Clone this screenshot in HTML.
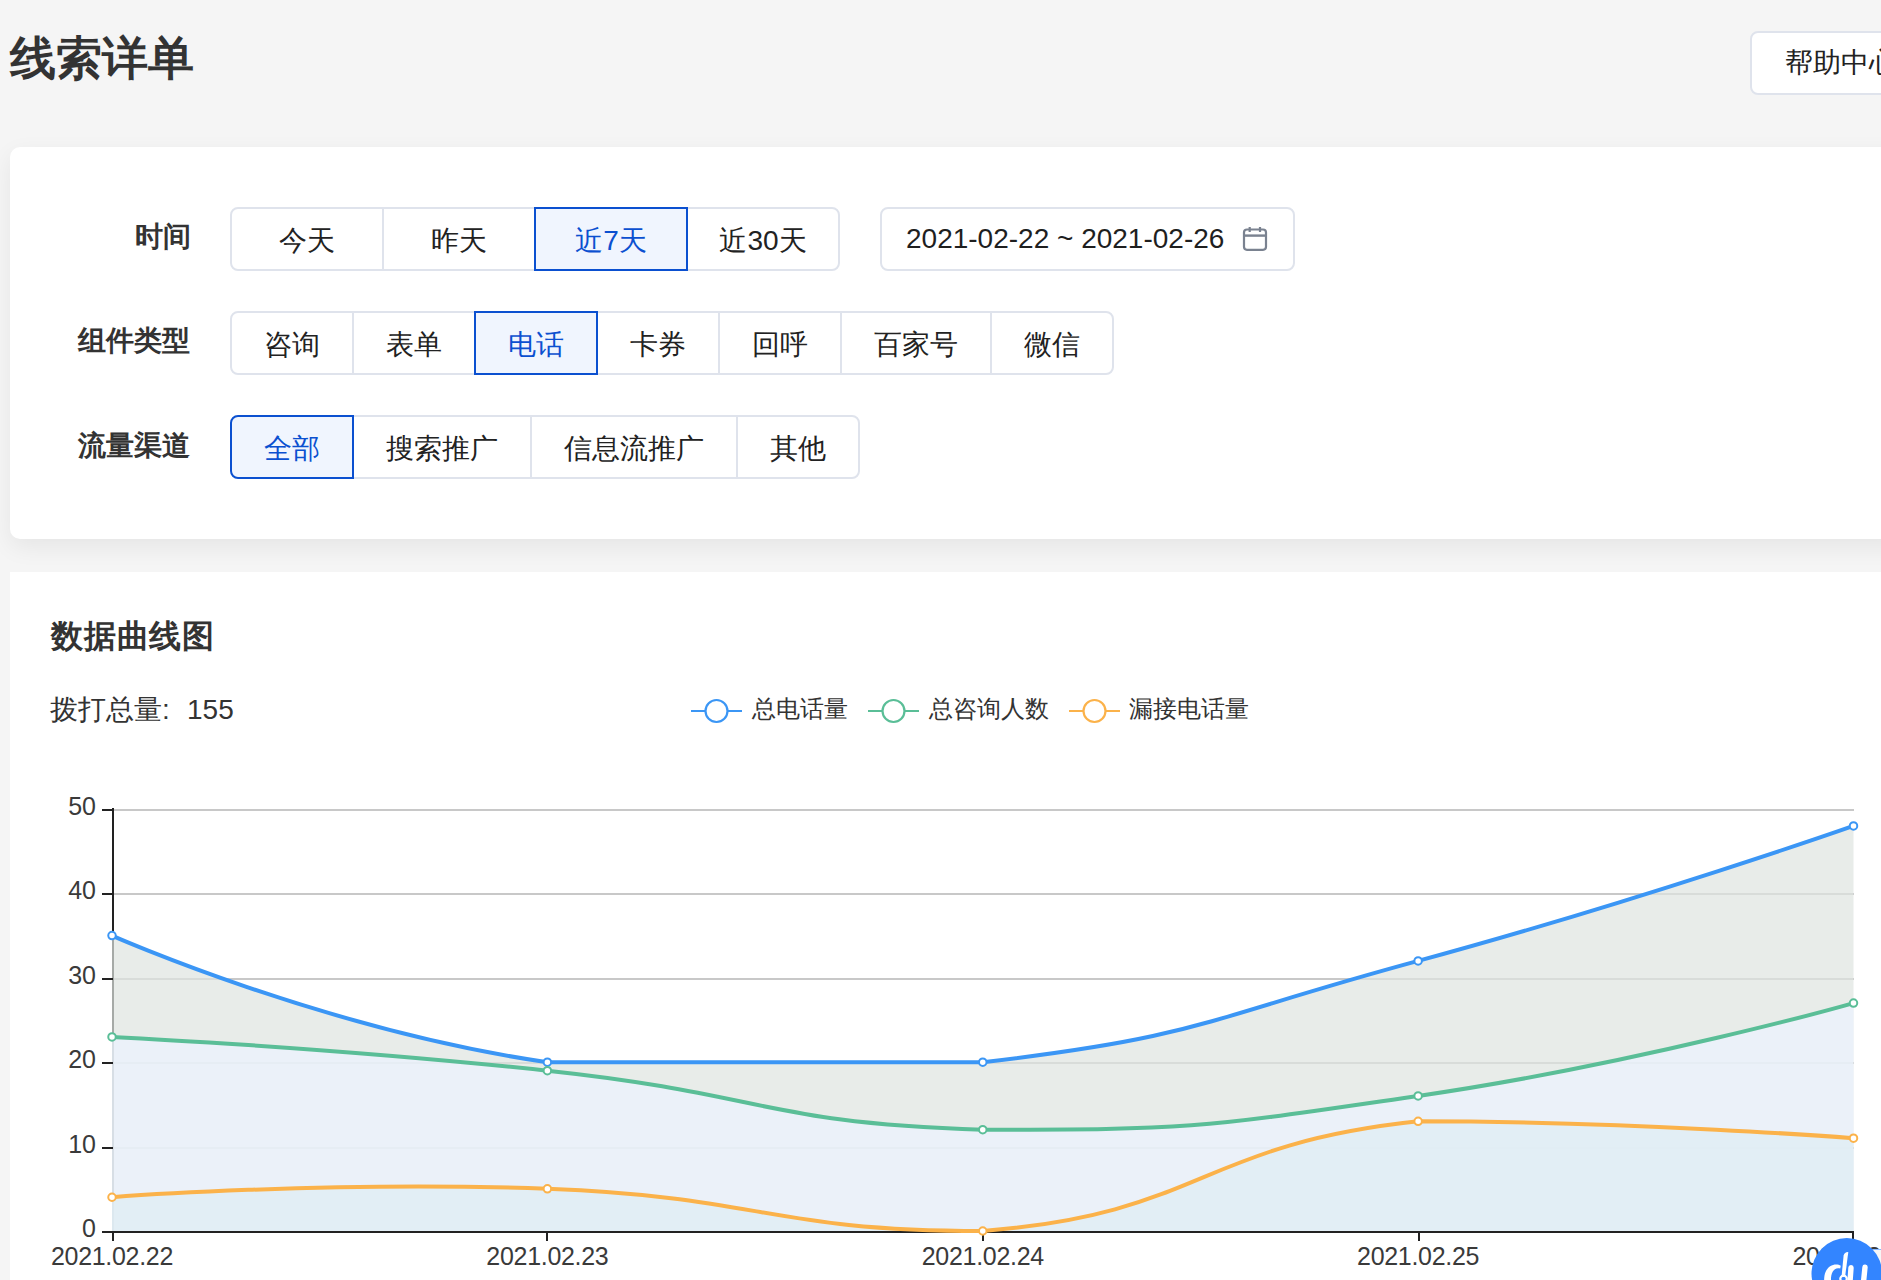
<!DOCTYPE html>
<html><head><meta charset="utf-8">
<style>
*{box-sizing:border-box;margin:0;padding:0}
html,body{width:1881px;height:1280px;overflow:hidden}
body{background:#f5f5f5;font-family:"Liberation Sans",sans-serif;color:#333;position:relative}
.abs{position:absolute;white-space:nowrap}
.title{left:10px;top:30px;font-size:46px;font-weight:bold;line-height:56px;color:#333}
.help{left:1750px;top:31px;width:200px;height:64px;border:2px solid #dfe3ec;border-radius:8px;background:#fff;font-size:28px;line-height:60px;padding-left:33px;color:#222}
.card1{left:10px;top:147px;width:1900px;height:392px;background:#fff;border-radius:10px;box-shadow:0 8px 24px rgba(0,0,0,0.065)}
.card2{left:10px;top:572px;width:1900px;height:760px;background:#fff}
.label{font-size:28px;font-weight:bold;line-height:32px;text-align:right;width:200px;color:#333}
.grp{display:flex;height:64px}
.btn{height:64px;border:2px solid #dfe3ec;margin-left:-2px;background:#fff;font-size:28px;line-height:63px;text-align:center;color:#222;position:relative}
.btn:first-child{margin-left:0;border-radius:8px 0 0 8px}
.btn:last-child{border-radius:0 8px 8px 0}
.btn.sel{border-color:#0b50d0;background:#f0f5fe;color:#0b50d0;z-index:2}
.date{left:880px;top:207px;width:415px;height:64px;border:2px solid #dfe3ec;border-radius:8px;background:#fff;font-size:28px;line-height:60px;padding-left:24px;color:#1f1f1f}
.h2{left:51px;top:616px;font-size:32px;font-weight:bold;line-height:40px;color:#333;letter-spacing:0.8px}
.total{left:50px;top:692px;font-size:28px;line-height:36px;color:#333}
.leg{font-size:24px;line-height:30px;color:#333;top:694px}
svg text{font-family:"Liberation Sans",sans-serif}
</style></head>
<body>
<div class="abs title">线索详单</div>
<div class="abs help">帮助中心</div>

<div class="abs card1"></div>
<div class="abs label" style="left:-9px;top:221px">时间</div>
<div class="abs label" style="left:-10px;top:325px">组件类型</div>
<div class="abs label" style="left:-10px;top:430px">流量渠道</div>

<div class="abs grp" style="left:230px;top:207px">
  <div class="btn" style="width:154px">今天</div>
  <div class="btn" style="width:154px">昨天</div>
  <div class="btn sel" style="width:154px">近7天</div>
  <div class="btn" style="width:154px">近30天</div>
</div>
<div class="abs date">2021-02-22 ~ 2021-02-26
<svg style="position:absolute;left:360px;top:18px" width="26" height="26" viewBox="0 0 26 26">
<rect x="2" y="2.5" width="22" height="20.3" rx="3" fill="none" stroke="#7a8290" stroke-width="2.2"/>
<rect x="2" y="7.4" width="22" height="2.4" fill="#7a8290"/>
<rect x="6.6" y="0" width="2.2" height="5" fill="#7a8290"/>
<rect x="16.9" y="0" width="2.2" height="5" fill="#7a8290"/>
</svg>
</div>

<div class="abs grp" style="left:230px;top:311px">
  <div class="btn" style="width:124px">咨询</div>
  <div class="btn" style="width:124px">表单</div>
  <div class="btn sel" style="width:124px">电话</div>
  <div class="btn" style="width:124px">卡券</div>
  <div class="btn" style="width:124px">回呼</div>
  <div class="btn" style="width:152px">百家号</div>
  <div class="btn" style="width:124px">微信</div>
</div>

<div class="abs grp" style="left:230px;top:415px">
  <div class="btn sel" style="width:124px">全部</div>
  <div class="btn" style="width:180px">搜索推广</div>
  <div class="btn" style="width:208px">信息流推广</div>
  <div class="btn" style="width:124px">其他</div>
</div>

<div class="abs card2"></div>
<div class="abs h2">数据曲线图</div>
<div class="abs total">拨打总量</div><div class="abs total" style="left:162px">:</div><div class="abs total" style="left:187px">155</div>

<svg class="abs" style="left:0;top:0" width="1881" height="1280">
<rect x="691" y="710" width="51" height="2" fill="#3b96f5"/><circle cx="716.5" cy="711" r="11" fill="#fff" stroke="#3b96f5" stroke-width="2.2"/><rect x="868" y="710" width="51" height="2" fill="#5abe97"/><circle cx="893.5" cy="711" r="11" fill="#fff" stroke="#5abe97" stroke-width="2.2"/><rect x="1069" y="710" width="51" height="2" fill="#fbb24a"/><circle cx="1094.5" cy="711" r="11" fill="#fff" stroke="#fbb24a" stroke-width="2.2"/>
<rect x="114" y="809" width="1740" height="2" fill="#c8c8c8"/>
<rect x="114" y="893" width="1740" height="2" fill="#c8c8c8"/>
<rect x="114" y="978" width="1740" height="2" fill="#c8c8c8"/>
<rect x="114" y="1062" width="1740" height="2" fill="#c8c8c8"/>
<rect x="114" y="1147" width="1740" height="2" fill="#c8c8c8"/>
<rect x="112" y="808" width="2" height="424" fill="#222"/>
<path d="M112.00,935.60 C112.00,935.60 325.27,1029.91 547.38,1062.20 C760.65,1062.20 767.93,1062.20 982.75,1062.20 C1203.31,1036.55 1202.57,1019.42 1418.12,960.92 C1637.94,901.26 1853.50,825.88 1853.50,825.88 L1853.5,1232 L112.0,1232 Z" fill="rgb(222,228,224)" fill-opacity="0.7"/>
<path d="M112.00,1036.88 C112.00,1036.88 330.35,1047.50 547.38,1070.64 C765.73,1093.92 764.40,1123.37 982.75,1129.72 C1199.77,1129.72 1202.53,1127.31 1418.12,1095.96 C1637.91,1064.01 1853.50,1003.12 1853.50,1003.12 L1853.5,1232 L112.0,1232 Z" fill="rgb(236,243,255)" fill-opacity="0.7"/>
<path d="M112.00,1197.24 C112.00,1197.24 330.18,1180.38 547.38,1188.80 C765.55,1197.26 767.90,1231.00 982.75,1231.00 C1203.28,1213.90 1197.17,1144.84 1418.12,1121.28 C1632.54,1121.28 1853.50,1138.16 1853.50,1138.16 L1853.5,1232 L112.0,1232 Z" fill="rgb(222,237,243)" fill-opacity="0.7"/>
<rect x="102" y="1231" width="1752" height="2" fill="#222"/>
<rect x="102" y="809" width="11" height="2" fill="#222"/>
<rect x="102" y="893" width="11" height="2" fill="#222"/>
<rect x="102" y="978" width="11" height="2" fill="#222"/>
<rect x="102" y="1062" width="11" height="2" fill="#222"/>
<rect x="102" y="1147" width="11" height="2" fill="#222"/>
<rect x="112" y="1231" width="2" height="10" fill="#222"/>
<rect x="546" y="1231" width="2" height="10" fill="#222"/>
<rect x="982" y="1231" width="2" height="10" fill="#222"/>
<rect x="1418" y="1231" width="2" height="10" fill="#222"/>
<rect x="1852" y="1231" width="2" height="10" fill="#222"/>
<path d="M112.00,935.60 C112.00,935.60 325.27,1029.91 547.38,1062.20 C760.65,1062.20 767.93,1062.20 982.75,1062.20 C1203.31,1036.55 1202.57,1019.42 1418.12,960.92 C1637.94,901.26 1853.50,825.88 1853.50,825.88" fill="none" stroke="#3b96f5" stroke-width="4" stroke-linejoin="bevel"/>
<path d="M112.00,1036.88 C112.00,1036.88 330.35,1047.50 547.38,1070.64 C765.73,1093.92 764.40,1123.37 982.75,1129.72 C1199.77,1129.72 1202.53,1127.31 1418.12,1095.96 C1637.91,1064.01 1853.50,1003.12 1853.50,1003.12" fill="none" stroke="#5abe97" stroke-width="4" stroke-linejoin="bevel"/>
<path d="M112.00,1197.24 C112.00,1197.24 330.18,1180.38 547.38,1188.80 C765.55,1197.26 767.90,1231.00 982.75,1231.00 C1203.28,1213.90 1197.17,1144.84 1418.12,1121.28 C1632.54,1121.28 1853.50,1138.16 1853.50,1138.16" fill="none" stroke="#fbb24a" stroke-width="4" stroke-linejoin="bevel"/>
<circle cx="112.0" cy="935.60" r="3.75" fill="#fff" stroke="#3b96f5" stroke-width="2"/>
<circle cx="547.375" cy="1062.20" r="3.75" fill="#fff" stroke="#3b96f5" stroke-width="2"/>
<circle cx="982.75" cy="1062.20" r="3.75" fill="#fff" stroke="#3b96f5" stroke-width="2"/>
<circle cx="1418.125" cy="960.92" r="3.75" fill="#fff" stroke="#3b96f5" stroke-width="2"/>
<circle cx="1853.5" cy="825.88" r="3.75" fill="#fff" stroke="#3b96f5" stroke-width="2"/>
<circle cx="112.0" cy="1036.88" r="3.75" fill="#fff" stroke="#5abe97" stroke-width="2"/>
<circle cx="547.375" cy="1070.64" r="3.75" fill="#fff" stroke="#5abe97" stroke-width="2"/>
<circle cx="982.75" cy="1129.72" r="3.75" fill="#fff" stroke="#5abe97" stroke-width="2"/>
<circle cx="1418.125" cy="1095.96" r="3.75" fill="#fff" stroke="#5abe97" stroke-width="2"/>
<circle cx="1853.5" cy="1003.12" r="3.75" fill="#fff" stroke="#5abe97" stroke-width="2"/>
<circle cx="112.0" cy="1197.24" r="3.75" fill="#fff" stroke="#fbb24a" stroke-width="2"/>
<circle cx="547.375" cy="1188.80" r="3.75" fill="#fff" stroke="#fbb24a" stroke-width="2"/>
<circle cx="982.75" cy="1231.00" r="3.75" fill="#fff" stroke="#fbb24a" stroke-width="2"/>
<circle cx="1418.125" cy="1121.28" r="3.75" fill="#fff" stroke="#fbb24a" stroke-width="2"/>
<circle cx="1853.5" cy="1138.16" r="3.75" fill="#fff" stroke="#fbb24a" stroke-width="2"/>
<g font-size="25" fill="#3a3a3a">
<text x="96" y="1237.0" text-anchor="end">0</text>
<text x="96" y="1152.6" text-anchor="end">10</text>
<text x="96" y="1068.2" text-anchor="end">20</text>
<text x="96" y="983.8" text-anchor="end">30</text>
<text x="96" y="899.4" text-anchor="end">40</text>
<text x="96" y="815.0" text-anchor="end">50</text>
<text x="112.0" y="1265" text-anchor="middle" letter-spacing="-0.3">2021.02.22</text>
<text x="547.4" y="1265" text-anchor="middle" letter-spacing="-0.3">2021.02.23</text>
<text x="982.8" y="1265" text-anchor="middle" letter-spacing="-0.3">2021.02.24</text>
<text x="1418.1" y="1265" text-anchor="middle" letter-spacing="-0.3">2021.02.25</text>
<text x="1853.5" y="1265" text-anchor="middle" letter-spacing="-0.3">2021.02.26</text>
</g>
</svg>
<div class="abs leg" style="left:752px">总电话量</div>
<div class="abs leg" style="left:929px">总咨询人数</div>
<div class="abs leg" style="left:1129px">漏接电话量</div>

<div class="abs" style="left:1873px;top:1249px;width:20px;height:40px;background:#f6f6f6;border-top:1px solid #8ab8ff"></div>
<svg class="abs" style="left:0;top:0" width="1881" height="1280">
<circle cx="1846.8" cy="1273.4" r="35.3" fill="#3385ff"/>
<path d="M1840.8,1265.8 C1836,1262.3 1825,1265 1824.2,1278 L1824,1284 L1831,1284 L1831,1278 C1831.5,1270 1836,1267 1840.2,1268.6 Z" fill="#fff"/>
<path d="M1843.6,1255.5 Q1844.5,1251.8 1848.3,1252 L1845.2,1276 Q1843.5,1278 1841.6,1276 Z" fill="#fff"/>
<path d="M1843.5,1282 a3.2,3.2 0 1 1 0.1,0" fill="none" stroke="#fff" stroke-width="2.2"/>
<path d="M1851,1267.8 L1850,1282" stroke="#fff" stroke-width="5.4" stroke-linecap="round"/>
<path d="M1865,1267.2 L1863.5,1282" stroke="#fff" stroke-width="5.4" stroke-linecap="round"/>
</svg>
</body></html>
